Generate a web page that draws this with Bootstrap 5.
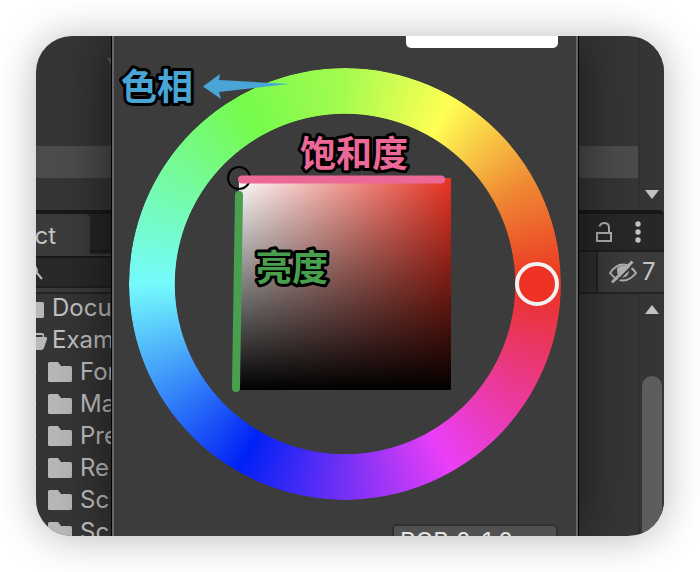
<!DOCTYPE html>
<html lang="zh-CN">
<head>
<meta charset="utf-8">
<meta name="viewport" content="width=device-width, initial-scale=1">
<title>Color picker</title>
<link href="https://cdn.jsdelivr.net/npm/bootstrap@5.3.0/dist/css/bootstrap.min.css" rel="stylesheet">
<style>
body{background:#fff;font-family:Inter,"Noto Sans CJK SC",sans-serif;font-size:24px;line-height:32px;color:#c4c4c4}
.stage{padding:36px}
.frame{border-radius:36px;background:#363636}
.frame-wrap{border-radius:36px;box-shadow:0 2px 40px rgba(0,0,0,.28)}
.side-left{flex:75 1 0;min-width:0}
.picker{flex:466 1 0;min-width:0;z-index:2;background:#3c3c3c;border:solid #000;border-width:0 1px;box-shadow:0 0 56px rgba(0,0,0,.6)}
.picker-body{border:solid #666;border-width:0 2px;padding:0 15px}
.side-right{flex:85 1 0;min-width:0}
.upper{height:174px;padding-top:110px}
.selected-row{height:32px;background:#4d4d4d}
.scroll-track{width:26px;border-left:2px solid #303030;background:#363636}
.foldout{right:0;top:22px;width:4px;height:7px}
button{background:none;border:0;padding:0;color:inherit}
.tabs-row{height:44px;border-top:4px solid #191919;background:#262626}
.tab-active{padding:2px 34px 0 0;width:54px;background:#3c3c3c;border-radius:0 5px 0 0;line-height:40px}
.tab-fill{border-bottom:2px solid #1c1c1c;height:38px}
.tabs-under{height:4px;background:#3c3c3c;border-bottom:2px solid #191919}
.search-row{height:30px;background:#2a2a2a;border-bottom:2px solid #212121}
.search-row input{width:40px;min-width:0;background:none;border:0;outline:0;color:inherit}
.search-gap{height:6px;background:#3c3c3c;border-bottom:2px solid #232323}
.tree{margin:-2px 0 0 -16px;list-style:none;padding:0}
.tree li{height:32px;display:flex;align-items:center;gap:8px;white-space:nowrap}
.tree svg{flex:none}
.tree .twist{margin-right:3px}
.tree .open-row{gap:4px}
.lock-row{height:42px;border-top:4px solid #191919;border-bottom:2px solid #1f1f1f;background:#282828;border-radius:0 5px 0 0;padding-left:17px;gap:22px}
.hidden-row{height:42px;border-bottom:2px solid #232323}
.hidden-row .spacer{width:19px;background:#303030;border-right:2px solid #222}
.hidden-row button{background:#3c3c3c;padding-left:11px;gap:5px;line-height:40px}
.arrow{display:block;width:14px;height:9px}
.arrow-up{margin-top:11px}
.arrow-down{margin-bottom:11px}
.thumb{margin:62px 2px 0;background:#5e5e5e;border-radius:10px 10px 0 0}
.swatch{width:152px;height:12px;background:#fff;border-radius:0 0 5px 5px;margin-right:3px}
.wheel-box{margin-top:20px;aspect-ratio:1}
.ring{inset:0;border-radius:50%;background:conic-gradient(from 90deg,#ea3323,#ea3ff7 60deg,#0021f5 120deg,#75fbfd 180deg,#75fb4c 240deg,#a6fb50 270deg,#ffff54 300deg,#f08c34 330deg,#ea3323);-webkit-mask:radial-gradient(closest-side,transparent 78.6%,#000 79%);mask:radial-gradient(closest-side,transparent 78.6%,#000 79%)}
.sv{left:25.5%;top:25.5%;width:49%;height:49%;background:linear-gradient(to top,#000,transparent),linear-gradient(to right,#fff,#ea3323)}
.notes{inset:0;overflow:visible}
.notes text{font-family:"Noto Sans CJK SC",sans-serif;font-size:36px;font-weight:700;paint-order:stroke;stroke:#000;stroke-width:6px;stroke-linejoin:round}
.mode{width:166px;height:36px;margin:24px 3px 0 0;background:#515151;border:2px solid #303030;border-radius:5px;color:#e4e4e4;padding:0 0 0 6px;appearance:none;font-size:24px;line-height:30px}
</style>
<script src="https://cdn.jsdelivr.net/npm/bootstrap@5.3.0/dist/js/bootstrap.bundle.min.js"></script>
</head>
<body>
<svg width="0" height="0" class="position-absolute" aria-hidden="true">
  <symbol id="folder" viewBox="0 0 24 20"><path fill="#b9b9b9" d="M1.500 0H10L13 4H22.500Q24 4 24 5.500V18.500Q24 20 22.500 20H1.500Q0 20 0 18.500V1.500Q0 0 1.500 0Z"/></symbol>
</svg>
<main class="stage vh-100">
 <div class="frame-wrap h-100">
  <div class="frame d-flex h-100 overflow-hidden">
   <section class="side-left d-flex flex-column overflow-hidden" aria-label="Project">
    <div class="upper flex-shrink-0 position-relative">
      <svg class="foldout position-absolute" viewBox="0 0 4 7"><path fill="#5c5c5c" d="M0 0H4V7Z"/></svg>
      <div class="selected-row"></div>
    </div>
    <div class="tabs-row d-flex flex-shrink-0"><button class="tab-active d-flex justify-content-end">ct</button><div class="tab-fill flex-grow-1"></div></div>
    <div class="tabs-under flex-shrink-0"></div>
    <div class="search-row d-flex align-items-center flex-shrink-0">
      <svg width="8" height="18" viewBox="0 0 8 18" fill="none" stroke="#b8b8b8"><path stroke-width="2" d="M-1 3Q3 8 -1 11M1 10L6 16"/></svg>
      <input type="search" aria-label="Search">
    </div>
    <div class="search-gap flex-shrink-0"></div>
    <ul class="tree">
      <li><svg width="24" height="20"><use href="#folder"/></svg>Docu</li>
      <li class="open-row"><svg width="28" height="20" viewBox="0 0 28 20"><path fill="#b9b9b9" d="M0 0H12L14 3H22Q24 3 24 5H0ZM0 7H25.500Q27.500 7 27 9L24 18Q23 20 21 20H0Z"/><path fill="#b9b9b9" d="M22.500 4H24V8H22.500Z"/></svg>Exam</li>
      <li><svg class="twist" width="17" height="12"><path fill="#777" d="M9 1L17 6L9 11Z"/></svg><svg width="24" height="20"><use href="#folder"/></svg>For</li>
      <li><svg class="twist" width="17" height="12"><path fill="#777" d="M9 1L17 6L9 11Z"/></svg><svg width="24" height="20"><use href="#folder"/></svg>Ma</li>
      <li><svg class="twist" width="17" height="12"><path fill="#777" d="M9 1L17 6L9 11Z"/></svg><svg width="24" height="20"><use href="#folder"/></svg>Pre</li>
      <li><svg class="twist" width="17" height="12"><path fill="#777" d="M9 1L17 6L9 11Z"/></svg><svg width="24" height="20"><use href="#folder"/></svg>Re</li>
      <li><svg class="twist" width="17" height="12"><path fill="#777" d="M9 1L17 6L9 11Z"/></svg><svg width="24" height="20"><use href="#folder"/></svg>Sc</li>
      <li><svg class="twist" width="17" height="12"><path fill="#777" d="M9 1L17 6L9 11Z"/></svg><svg width="24" height="20"><use href="#folder"/></svg>Sc</li>
    </ul>
   </section>

   <section class="picker position-relative" aria-label="Color">
    <div class="picker-body h-100 d-flex flex-column">
      <div class="swatch align-self-end flex-shrink-0"></div>
      <div class="wheel-box position-relative flex-shrink-0">
        <div class="ring position-absolute"></div>
        <div class="sv position-absolute"></div>
        <svg class="notes position-absolute w-100 h-100" viewBox="0 0 432 432">
          <circle cx="110" cy="110" r="11" fill="none" stroke="#000" stroke-width="2"/>
          <circle cx="408" cy="216" r="20" fill="#ee3324" stroke="#f2f2f2" stroke-width="4"/>
          <path d="M113 111.500H312" stroke="#ec6896" stroke-width="8" stroke-linecap="round"/>
          <path d="M110 127L107 320" stroke="#48a04f" stroke-width="8" stroke-linecap="round"/>
          <path fill="#48a5d5" d="M74 18.500L91 6L90 12L160 16L90 24L92 31Z"/>
          <text x="-8" y="32" fill="#48a5d5">色相</text>
          <text x="171" y="99" fill="#ec6896">饱和度</text>
          <text x="127" y="213" fill="#48a04f">亮度</text>
        </svg>
      </div>
      <select class="mode align-self-end flex-shrink-0" aria-label="Color mode"><option>RGB 0-1.0</option></select>
    </div>
   </section>

   <section class="side-right d-flex flex-column" aria-label="Inspector">
    <div class="d-flex flex-shrink-0">
      <div class="upper flex-grow-1"><div class="selected-row"></div></div>
      <div class="scroll-track d-flex flex-column justify-content-end align-items-center"><button class="arrow-down" aria-label="Scroll down"><svg class="arrow"><path fill="#c4c4c4" d="M0 0H14L7 9Z"/></svg></button></div>
    </div>
    <div class="lock-row d-flex align-items-center flex-shrink-0">
      <button aria-label="Lock" class="d-flex"><svg width="16" height="22" viewBox="0 0 16 22" fill="none" stroke="#b4b4b4" stroke-width="2"><rect x="1" y="12" width="14" height="8"/><path d="M3.500 5.500Q4.500 2 8.500 2Q13 2 13 7V12"/></svg></button>
      <button aria-label="More" class="d-flex"><svg width="8" height="22" fill="#c4c4c4"><circle cx="4" cy="3" r="2.700"/><circle cx="4" cy="11" r="2.700"/><circle cx="4" cy="19" r="2.700"/></svg></button>
    </div>
    <div class="hidden-row d-flex flex-shrink-0">
      <div class="spacer flex-shrink-0"></div>
      <button class="flex-grow-1 d-flex align-items-center">
        <svg width="28" height="24" viewBox="0 0 28 24" fill="none" stroke="#b4b4b4" stroke-width="2"><path d="M1 13Q7 4.500 14 4.500Q21 4.500 27 13Q21 20.500 14 20.500Q7 20.500 1 13Z"/><path fill="#b4b4b4" stroke="none" d="M8 8Q7.500 18 14 17.500Q20.500 17 20 8Q14 3 8 8Z"/><path stroke="#3c3c3c" d="M5.500 24L26 3"/><path stroke-width="3" d="M3 22.500L23.500 1.500"/></svg>
        <span>7</span>
      </button>
    </div>
    <div class="d-flex flex-grow-1">
      <div class="flex-grow-1"></div>
      <div class="scroll-track d-flex flex-column">
        <button class="arrow-up align-self-center flex-shrink-0" aria-label="Scroll up"><svg class="arrow"><path fill="#c4c4c4" d="M0 9H14L7 0Z"/></svg></button>
        <div class="thumb flex-grow-1"></div>
      </div>
    </div>
   </section>
  </div>
 </div>
</main>
</body>
</html>
